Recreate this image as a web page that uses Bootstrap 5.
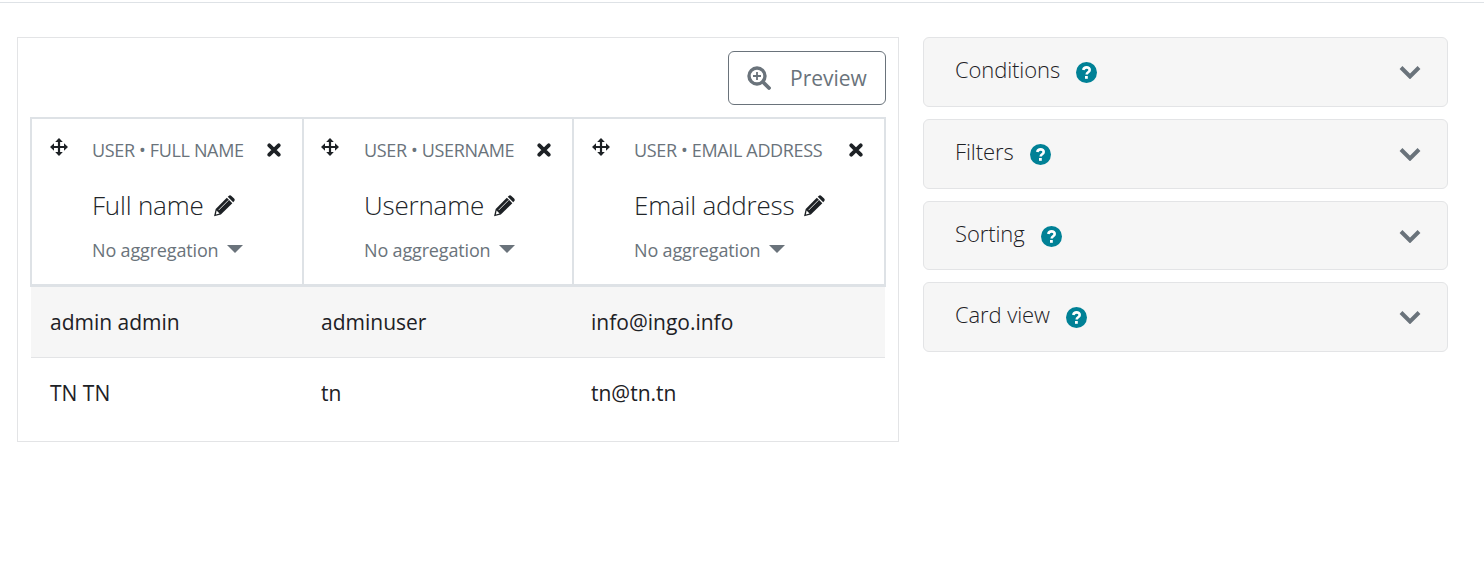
<!DOCTYPE html>
<html lang="en"><head><meta charset="utf-8"><title>Report</title>
<link href="https://cdn.jsdelivr.net/npm/bootstrap@5.3.0/dist/css/bootstrap.min.css" rel="stylesheet">
<style>
body{font-family:"Open Sans","Noto Sans",sans-serif;background:#fff;color:#1d2125;border-top:1px solid #dee2e6;margin-top:2px;height:566px;overflow:hidden}
.page-wrap{padding:34px 36px 0 17px;gap:24px}
.builder{width:882px;height:405px;border:1px solid #e3e4e6;padding:13px 12px 0 13px;flex:none}
.side{width:525px;flex:none;gap:12px}
.preview-btn{width:158px;height:54px;font-size:21px;color:#6a737b;border:1px solid #6a737b;border-radius:6px;padding:0 10px 0 18px;gap:19px}
.preview-btn svg{width:24px;height:24px;flex:none}
.preview-btn span{margin-top:2px}
.rep-table{width:854px;table-layout:fixed;margin:12px 0 0 -1px;font-size:21px;border-collapse:collapse}
.c1{width:272px}.c2{width:270px}.c3{width:312px}
.rep-table th{height:167px;padding:0;border:2px solid #dee2e6;font-weight:400;vertical-align:top;position:relative;border-bottom-width:3px}
.rep-table td{padding:2px 0 0 18px;height:71px;vertical-align:middle;border:0;color:#1d2125;background:transparent;box-shadow:none}
.rep-table td:first-child{padding-left:19px}
.rep-table .r1 td{height:72px;background:#f6f6f6;border-bottom:1px solid #e3e4e6}
.hd-inner{padding:19px 21px 0 18px;gap:24px;display:flex}
.rep-table th:nth-child(2) .hd-inner{padding-left:17px;gap:25px}
.mv{width:18px;height:18px;flex:none}
.hd-col{flex:1;min-width:0}
.hd-top{font-size:18px;line-height:24px;color:#6a737b;height:24px;letter-spacing:-.35px;white-space:nowrap}
.x{width:14px;height:14px;flex:none;margin-top:5px}
.hd-title{font-size:26px;font-weight:300;line-height:36px;margin-top:25px;letter-spacing:-.2px;gap:9px;white-space:nowrap}
.hd-title svg{width:23px;height:23px;flex:none}
.hd-agg{font-size:18px;line-height:24px;margin-top:15px;color:#6a737b;letter-spacing:-.16px;gap:9px;white-space:nowrap}
.caret-ico{width:0;height:0;border-left:8px solid transparent;border-right:8px solid transparent;border-top:8px solid #6a737b;margin-top:-3px}
.acc{height:70px;background:#f6f6f6;border:1px solid #e3e4e6;border-radius:6px;padding:0 26px 0 31px;font-size:22px;font-weight:300;color:#1d2125}
.acc-lbl{letter-spacing:-.1px;margin-bottom:6px}
.acc-h{height:69px}
.acc-h .acc-lbl{margin-bottom:4px}
.help{width:21px;height:21px;margin-left:16px;margin-top:1px}
.chev{width:22px;height:14px}
</style></head><body>
<div class="d-flex page-wrap">
<div class="builder">
<div class="d-flex justify-content-end"><button class="btn preview-btn d-flex align-items-center" type="button"><svg viewBox="0 0 24 24"><circle cx="10" cy="10" r="8" fill="none" stroke="#6a737b" stroke-width="3.4"/><path d="M16 16l6 6" stroke="#6a737b" stroke-width="3.8" stroke-linecap="round"/><path d="M10 6v8M6 10h8" stroke="#6a737b" stroke-width="1.8"/></svg><span>Preview</span></button></div>
<table class="table rep-table"><colgroup><col class="c1"><col class="c2"><col class="c3"></colgroup>
<thead><tr>
<th><div class="hd-inner"><svg class="mv" viewBox="0 0 18 18"><use href="#i-move"/></svg><div class="hd-col"><div class="d-flex justify-content-between"><div class="hd-top">USER • FULL NAME</div><svg class="x" viewBox="0 0 14 14"><use href="#i-x"/></svg></div><div class="hd-title d-flex align-items-center"><span>Full name</span><svg viewBox="0 0 22 22"><use href="#i-pen"/></svg></div><div class="hd-agg d-flex align-items-center"><span>No aggregation</span><i class="caret-ico"></i></div></div></div></th>
<th><div class="hd-inner"><svg class="mv" viewBox="0 0 18 18"><use href="#i-move"/></svg><div class="hd-col"><div class="d-flex justify-content-between"><div class="hd-top">USER • USERNAME</div><svg class="x" viewBox="0 0 14 14"><use href="#i-x"/></svg></div><div class="hd-title d-flex align-items-center"><span>Username</span><svg viewBox="0 0 22 22"><use href="#i-pen"/></svg></div><div class="hd-agg d-flex align-items-center"><span>No aggregation</span><i class="caret-ico"></i></div></div></div></th>
<th><div class="hd-inner"><svg class="mv" viewBox="0 0 18 18"><use href="#i-move"/></svg><div class="hd-col"><div class="d-flex justify-content-between"><div class="hd-top">USER • EMAIL ADDRESS</div><svg class="x" viewBox="0 0 14 14"><use href="#i-x"/></svg></div><div class="hd-title d-flex align-items-center"><span>Email address</span><svg viewBox="0 0 22 22"><use href="#i-pen"/></svg></div><div class="hd-agg d-flex align-items-center"><span>No aggregation</span><i class="caret-ico"></i></div></div></div></th>
</tr></thead>
<tbody>
<tr class="r1"><td>admin admin</td><td>adminuser</td><td>info@ingo.info</td></tr>
<tr><td>TN TN</td><td>tn</td><td>tn@tn.tn</td></tr>
</tbody></table>
</div>
<div class="side d-flex flex-column">
<div class="acc d-flex align-items-center justify-content-between"><div class="d-flex align-items-center"><span class="acc-lbl">Conditions</span><svg class="help" viewBox="0 0 21 21"><use href="#i-help"/></svg></div><svg class="chev" viewBox="0 0 22 14"><use href="#i-chev"/></svg></div>
<div class="acc d-flex align-items-center justify-content-between"><div class="d-flex align-items-center"><span class="acc-lbl">Filters</span><svg class="help" viewBox="0 0 21 21"><use href="#i-help"/></svg></div><svg class="chev" viewBox="0 0 22 14"><use href="#i-chev"/></svg></div>
<div class="acc acc-h d-flex align-items-center justify-content-between"><div class="d-flex align-items-center"><span class="acc-lbl">Sorting</span><svg class="help" viewBox="0 0 21 21"><use href="#i-help"/></svg></div><svg class="chev" viewBox="0 0 22 14"><use href="#i-chev"/></svg></div>
<div class="acc d-flex align-items-center justify-content-between"><div class="d-flex align-items-center"><span class="acc-lbl">Card view</span><svg class="help" viewBox="0 0 21 21"><use href="#i-help"/></svg></div><svg class="chev" viewBox="0 0 22 14"><use href="#i-chev"/></svg></div>
</div>
</div>
<svg width="0" height="0" class="d-block"><defs>
<g id="i-move"><path d="M9 1v16M1 9h16" stroke="#1d2125" stroke-width="2.200"/><path d="M9 0l3.800 4H5.200zM9 18l3.800-4H5.200zM0 9l4-3.800v7.600zM18 9l-4-3.800v7.600z" fill="#1d2125"/></g>
<g id="i-x"><path d="M2.300 2.300l9.400 9.400M11.700 2.300l-9.400 9.400" stroke="#1d2125" stroke-width="3.800" stroke-linecap="round"/></g>
<g id="i-pen"><path d="M13.200 3.500l5.300 5.300L7.500 19.600 1 21.200 2.600 14.400z" fill="#1d2125"/><path d="M15 1.800c.8-.8 1.800-.8 2.600 0l2.600 2.600c.8.800.8 1.800 0 2.600l-.9.900-5.200-5.200z" fill="#1d2125"/><path d="M5.400 15.400l9.400-9.400" stroke="#fff" stroke-width=".8"/><path d="M3.400 15.700l2.900 2.900-3.500.9z" fill="#fff"/></g>
<g id="i-help"><circle cx="10.500" cy="10.500" r="10.500" fill="#008196"/><path d="M7.300 8c.3-1.700 1.600-2.600 3.300-2.600 1.800 0 3.100 1 3.100 2.600 0 2.300-3 2.200-3 4.400" fill="none" stroke="#fff" stroke-width="2.600"/><rect x="9" y="14" width="2.800" height="2.800" fill="#fff"/></g>
<g id="i-chev"><path d="M2 2.500l9 9 9-9" fill="none" stroke="#6a737b" stroke-width="4"/></g>
</defs></svg>
</body></html>
